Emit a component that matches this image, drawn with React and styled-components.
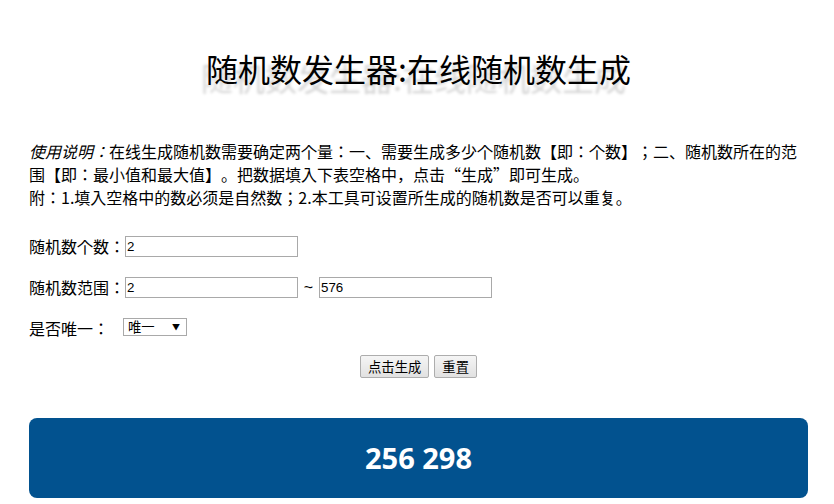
import styled, { createGlobalStyle } from 'styled-components';

const GlobalStyle = createGlobalStyle`
  html, body {
    margin: 0;
    padding: 0;
    background: #fff;
  }

  body {
    font-family: "Noto Sans CJK JP", "Noto Sans CJK SC", "Noto Sans", sans-serif;
    font-size: 16px;
    color: #000;
    text-spacing-trim: space-all;
  }
`;

function App() {
  return (
    <>
      <GlobalStyle />
      <Page>
        <Title>随机数发生器:在线随机数生成</Title>

        <Intro>
          <em>使用说明：</em>在线生成随机数需要确定两个量：一、需要生成多少个随机数【即：个数】；二、随机数所在的范围【即：最小值和最大值】。把数据填入下表空格中，点击<Quote>“生成”</Quote>即可生成。
          <br />
          附：1.填入空格中的数必须是自然数；2.本工具可设置所生成的随机数是否可以重复。
        </Intro>

        <Row>
          <Label>随机数个数：</Label>
          <Field defaultValue="2" />
        </Row>

        <Row>
          <Label>随机数范围：</Label>
          <Field defaultValue="2" />
          <Tilde>~</Tilde>
          <Field defaultValue="576" />
        </Row>

        <Row>
          <Label>是否唯一：</Label>
          <SelectWrap>
            <Select defaultValue="1">
              <option value="1">唯一</option>
              <option value="0">不唯一</option>
            </Select>
            <Arrow>▼</Arrow>
          </SelectWrap>
        </Row>

        <Actions>
          <Button>点击生成</Button>
          <Button>重置</Button>
        </Actions>

        <Result>256 298</Result>
      </Page>
    </>
  );
}

const Page = styled.div`
  padding: 0 26px 0 29px;
`;

const Title = styled.h1`
  margin: 51px 0 0;
  font-family: "Noto Sans CJK SC", sans-serif;
  font-size: 32px;
  font-weight: 400;
  line-height: 35px;
  text-align: center;
  text-shadow: -5px 9px 3px #d4d4d4;
`;

const Intro = styled.p`
  margin: 54px 0 27px;
  line-height: 23px;

  em {
    font-style: italic;
  }
`;

const Quote = styled.span`
  font-family: "Noto Sans CJK SC", sans-serif;
`;

const Row = styled.div`
  display: flex;
  align-items: center;
  height: 21px;
  margin-bottom: 20px;
`;

const Label = styled.span`
  line-height: 21px;
  white-space: nowrap;
`;

const Field = styled.input`
  box-sizing: border-box;
  width: 173px;
  height: 21px;
  padding: 0 1px;
  border: 1px solid #a9a9a9;
  font-family: "Liberation Sans", Arial, sans-serif;
  font-size: 13.33px;
  color: #000;
  outline: none;
`;

const Tilde = styled.span`
  width: 21px;
  text-align: center;
  font-family: "Liberation Sans", Arial, sans-serif;
  font-size: 16px;
`;

const SelectWrap = styled.div`
  position: relative;
  align-self: flex-start;
  margin-left: 14px;
`;

const Select = styled.select`
  display: block;
  box-sizing: border-box;
  appearance: none;
  width: 64px;
  height: 18px;
  padding: 0 0 0 4px;
  border: 1px solid #a9a9a9;
  border-radius: 0;
  background: #fff;
  font-family: "Noto Sans CJK SC", sans-serif;
  font-size: 13.33px;
  line-height: 16px;
  color: #000;
  outline: none;
`;

const Arrow = styled.span`
  position: absolute;
  right: 7px;
  top: 4px;
  font-size: 8px;
  line-height: 10px;
  pointer-events: none;
`;

const Actions = styled.div`
  display: flex;
  justify-content: center;
  gap: 5px;
  margin-top: -4px;
`;

const Button = styled.button`
  box-sizing: border-box;
  height: 23px;
  padding: 0 7px;
  border: 1px solid #adadad;
  border-radius: 2px;
  background: linear-gradient(#f5f5f5, #e1e1e1);
  font-family: "Noto Sans CJK SC", sans-serif;
  font-size: 13.33px;
  color: #000;
  cursor: pointer;
`;

const Result = styled.div`
  margin-top: 40px;
  height: 80px;
  border-radius: 8px;
  background: #02528f;
  color: #fff;
  font-family: "Open Sans", "Noto Sans", sans-serif;
  font-size: 29px;
  font-weight: 700;
  line-height: 80px;
  text-align: center;
`;

export default App;
